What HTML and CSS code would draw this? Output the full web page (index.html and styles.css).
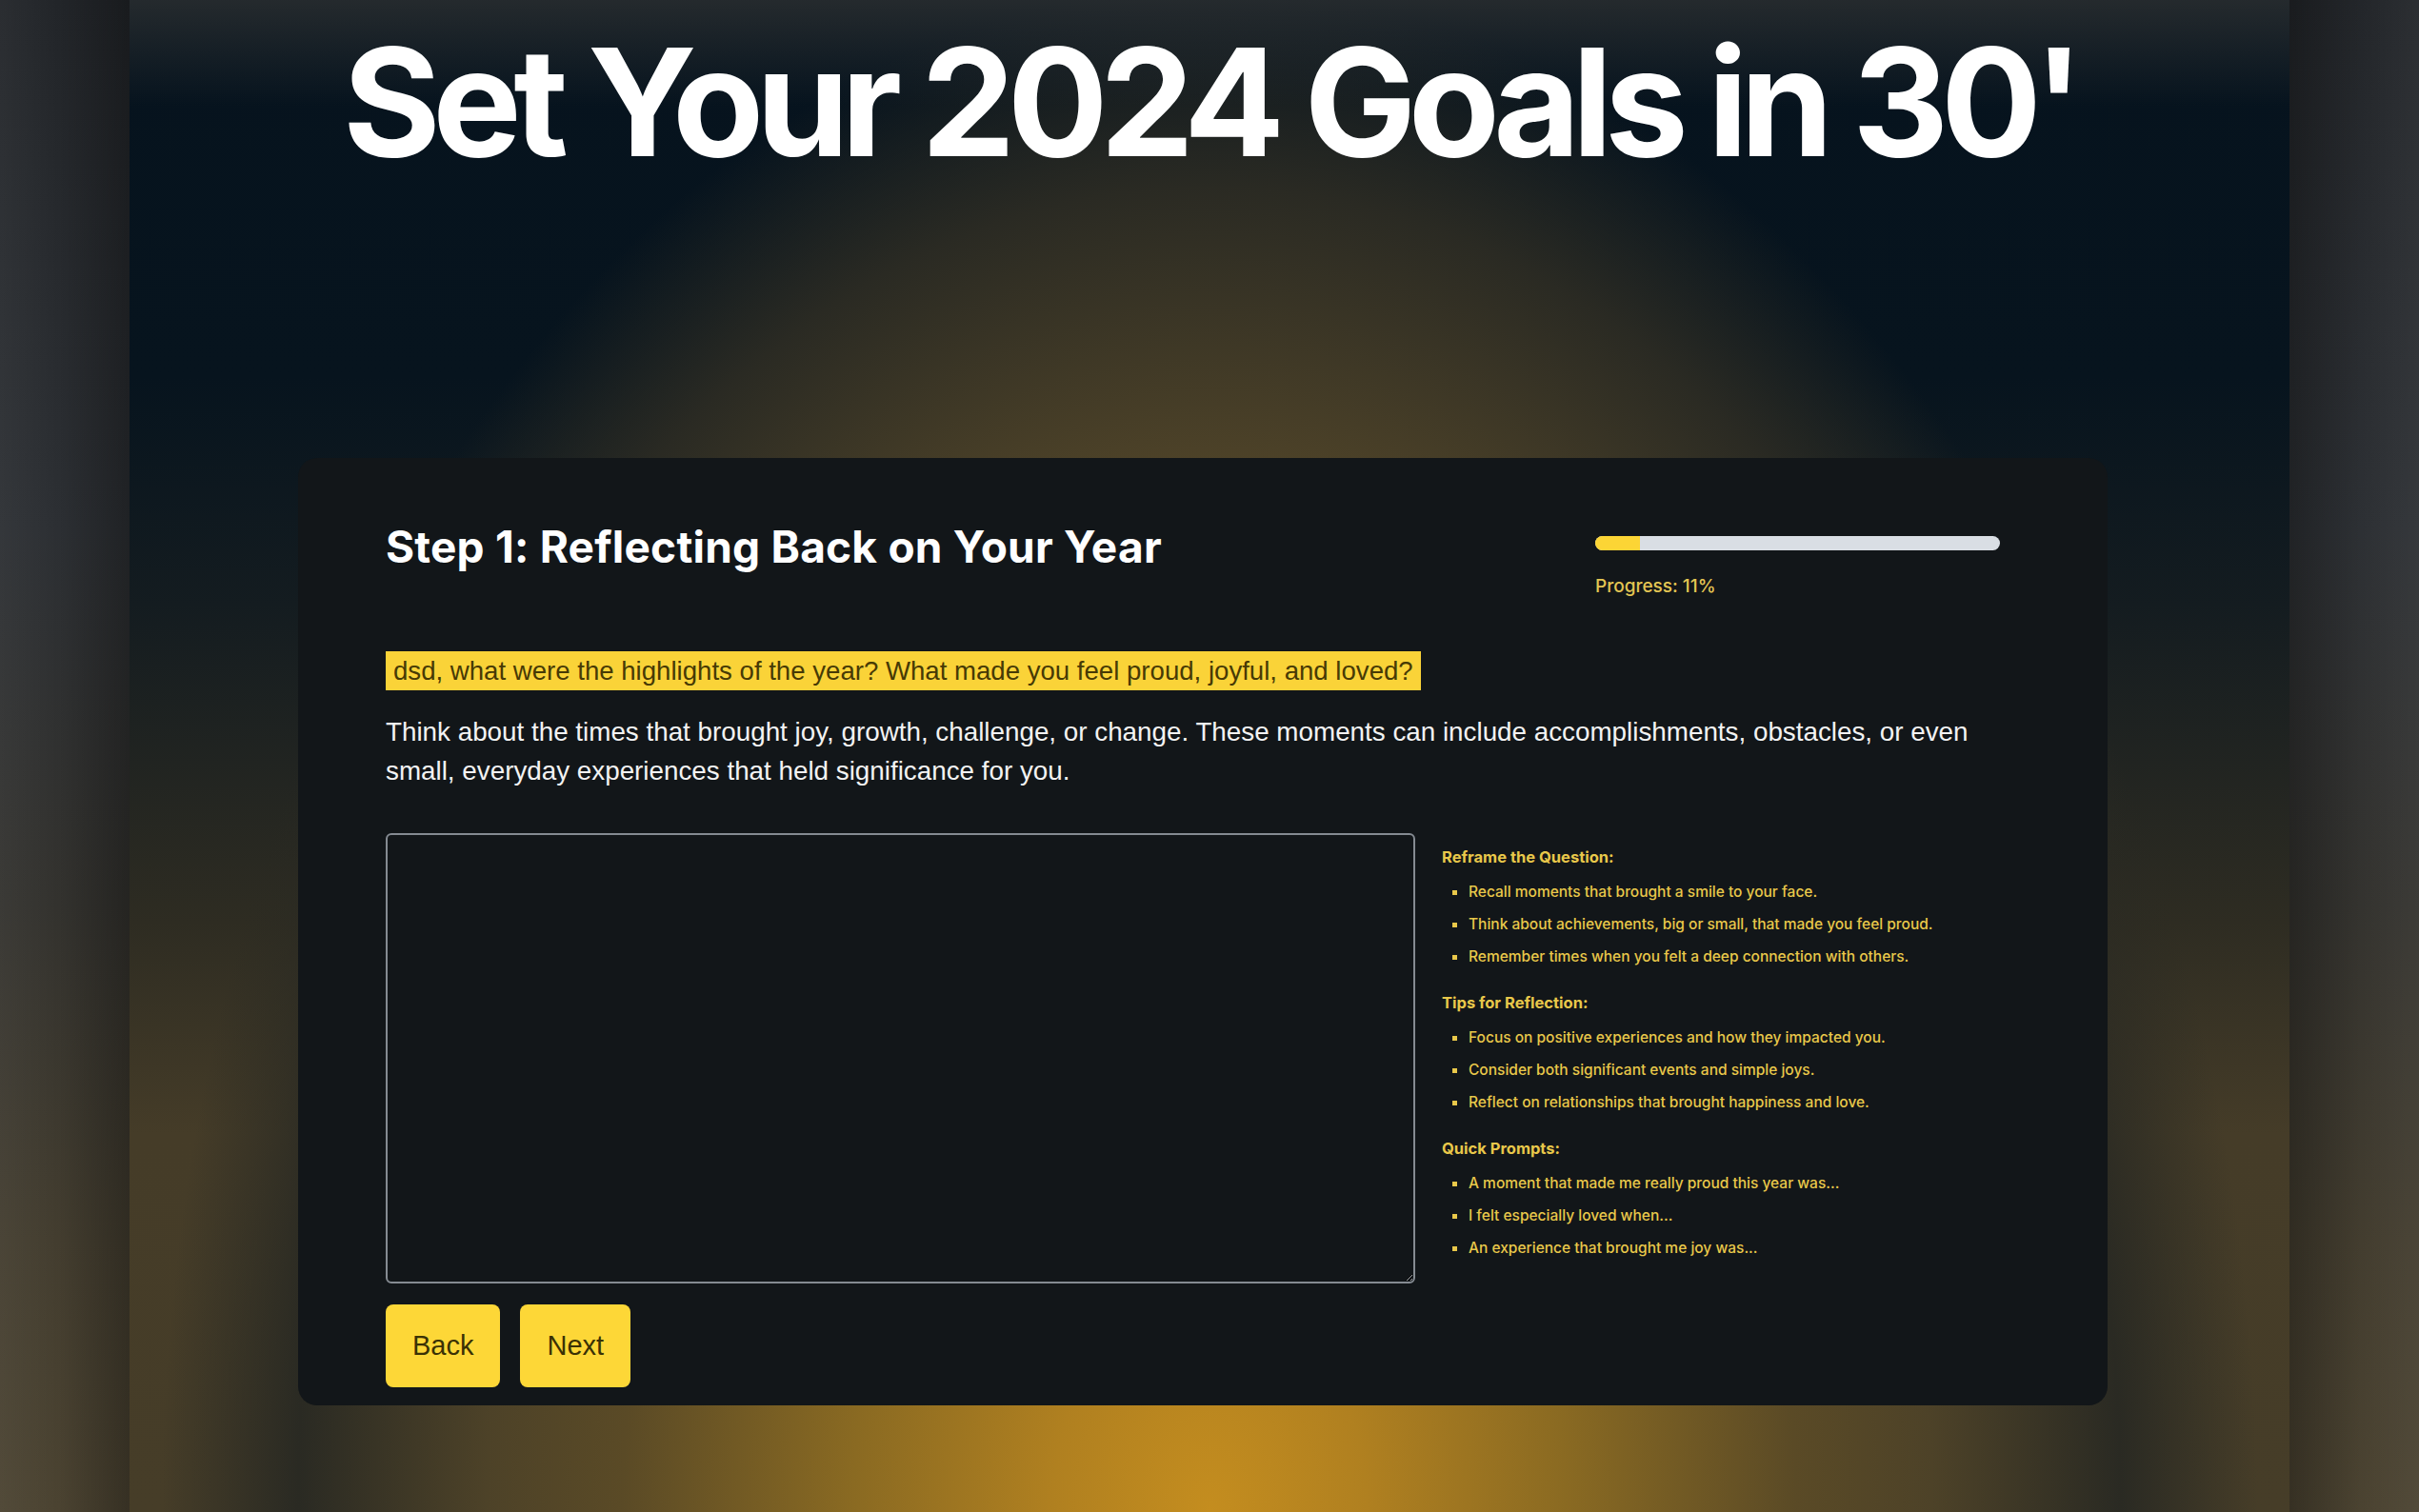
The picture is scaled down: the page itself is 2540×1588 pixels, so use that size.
FILE: index.html
```html
<!DOCTYPE html>
<html>
	<head>
		<meta charset="utf-8">
		<title>Set Your 2024 Goals in 30'</title>
		<link rel="stylesheet" href="styles.css">
	</head>
<body>

	<div class="frame">
		<div class="side side-left"></div>

		<main class="stage">
			<h1 class="title">Set Your 2024 Goals in 30'</h1>

			<section class="card">
				<header class="card-head">
					<h2 class="step-title">Step 1: Reflecting Back on Your Year</h2>
					<div class="progress">
						<div class="progress-track"><div class="progress-fill" style="width: 11%"></div></div>
						<p class="progress-label">Progress: 11%</p>
					</div>
				</header>

				<p class="question"><span>dsd, what were the highlights of the year? What made you feel proud, joyful, and loved?</span></p>
				<p class="intro">Think about the times that brought joy, growth, challenge, or change. These moments can include accomplishments, obstacles, or even small, everyday experiences that held significance for you.</p>

				<div class="answer-row">
					<textarea class="answer"></textarea>

					<div class="hints">
						<h4>Reframe the Question:</h4>
						<ul>
							<li>Recall moments that brought a smile to your face.</li>
							<li>Think about achievements, big or small, that made you feel proud.</li>
							<li>Remember times when you felt a deep connection with others.</li>
						</ul>
						<h4>Tips for Reflection:</h4>
						<ul>
							<li>Focus on positive experiences and how they impacted you.</li>
							<li>Consider both significant events and simple joys.</li>
							<li>Reflect on relationships that brought happiness and love.</li>
						</ul>
						<h4>Quick Prompts:</h4>
						<ul>
							<li>A moment that made me really proud this year was...</li>
							<li>I felt especially loved when...</li>
							<li>An experience that brought me joy was...</li>
						</ul>
					</div>
				</div>

				<div class="nav-buttons">
					<button class="btn" type="button">Back</button>
					<button class="btn" type="button">Next</button>
				</div>
			</section>
		</main>

		<div class="side side-right"></div>
	</div>

</body>
</html>
```

FILE: styles.css
```css
	html, body {
		margin: 0;
		padding: 0;
		background: #1c1f22;
	}
	body {
		font-family: Inter, "Noto Sans", sans-serif;
		color: #f1f1f1;
	}

	.frame {
		display: grid;
		grid-template-columns: 136px 1fr 136px;
		height: 1588px;
		overflow: hidden;
	}

/* blurred video edges */
	.side {
		background:
			linear-gradient(90deg, rgba(255,255,255,0.04) 0%, rgba(0,0,0,0) 45%, rgba(0,0,0,0.28) 100%),
			linear-gradient(180deg, #222529 0%, #2c2f33 35%, #33322e 60%, #433d2f 82%, #4b4331 100%);
	}
	.side-right {
		background:
			linear-gradient(270deg, rgba(255,255,255,0.04) 0%, rgba(0,0,0,0) 45%, rgba(0,0,0,0.28) 100%),
			linear-gradient(180deg, #23262a 0%, #2d3034 35%, #34332f 60%, #433d2f 82%, #4b4331 100%);
	}

	.stage {
		padding-top: 27px;
		background:
			linear-gradient(180deg, rgba(42,46,48,0.85) 0%, rgba(42,46,48,0) 7%),
			radial-gradient(ellipse 1100px 1600px at 50% 100%, #c48d1f 0%, #b08020 15%, #8a6a22 34%, #5a4a26 56%, #4d4228 69%, #2a2a23 87%, rgba(7,20,30,0) 100%),
			linear-gradient(0deg, #463d28 0%, #453c28 25%, #2e2c22 39%, #141c20 60%, #07141e 75%, #06131e 100%);
	}

	.title {
		margin: 0;
		text-align: center;
		font-size: 157px;
		line-height: 160px;
		font-weight: 700;
		letter-spacing: -0.054em;
		color: #fff;
	}

	.card {
		width: 1900px;
		box-sizing: border-box;
		margin: 294px 0 0 177px;
		padding: 67px 92px 19px;
		background: #121619;
		border-radius: 20px;
	}

	.card-head {
		display: flex;
		justify-content: space-between;
		align-items: flex-start;
	}
	.step-title {
		margin: 0;
		font-size: 46px;
		line-height: 52px;
		font-weight: 700;
		letter-spacing: 0.005em;
		color: #fff;
	}
	.progress {
		width: 425px;
		margin-right: 21px;
		padding-top: 15px;
	}
	.progress-track {
		height: 15px;
		border-radius: 8px;
		background: #d9dee4;
		overflow: hidden;
	}
	.progress-fill {
		height: 100%;
		background: #fcd535;
	}
	.progress-label {
		margin: 24px 0 0;
		font-size: 19px;
		line-height: 28px;
		font-weight: 500;
		color: #e3c553;
	}

	.question,
	.intro,
	.btn {
		font-family: "Liberation Sans", Arial, sans-serif;
	}
	.question {
		margin: 54px 0 0;
		font-size: 27.6px;
		line-height: 41px;
	}
	.question span {
		display: inline-block;
		padding: 0 8px;
		background: #fad338;
		color: #473a05;
	}
	.intro {
		margin: 23px 0 0;
		font-size: 27.8px;
		line-height: 41px;
		color: #f3f3f3;
	}

	.answer-row {
		display: grid;
		grid-template-columns: 1081px 1fr;
		gap: 28px;
		margin-top: 45px;
	}
	.answer {
		box-sizing: border-box;
		width: 1081px;
		height: 473px;
		margin: 0;
		padding: 12px;
		background: transparent;
		border: 2px solid #858b92;
		border-radius: 6px;
		color: #f1f1f1;
		font: inherit;
		font-size: 26px;
	}

	.hints {
		padding-top: 13px;
		color: #e9c84a;
	}
	.hints h4 {
		margin: 0;
		font-size: 16.5px;
		line-height: 24px;
		font-weight: 700;
	}
	.hints ul {
		list-style: none;
		margin: 13px 0 24px;
		padding: 0;
	}
	.hints li {
		position: relative;
		padding-left: 28px;
		font-size: 15.5px;
		line-height: 24px;
		font-weight: 500;
	}
	.hints li + li {
		margin-top: 10px;
	}
	.hints li::before {
		content: "";
		position: absolute;
		left: 11px;
		top: 10px;
		width: 5px;
		height: 5px;
		background: #e9c84a;
	}

	.nav-buttons {
		display: flex;
		gap: 21px;
		margin-top: 22px;
	}
	.btn {
		height: 87px;
		padding: 0 28px;
		border: none;
		border-radius: 8px;
		background: #fdd737;
		color: #3a3105;
		font-size: 29px;
		cursor: pointer;
	}
```
